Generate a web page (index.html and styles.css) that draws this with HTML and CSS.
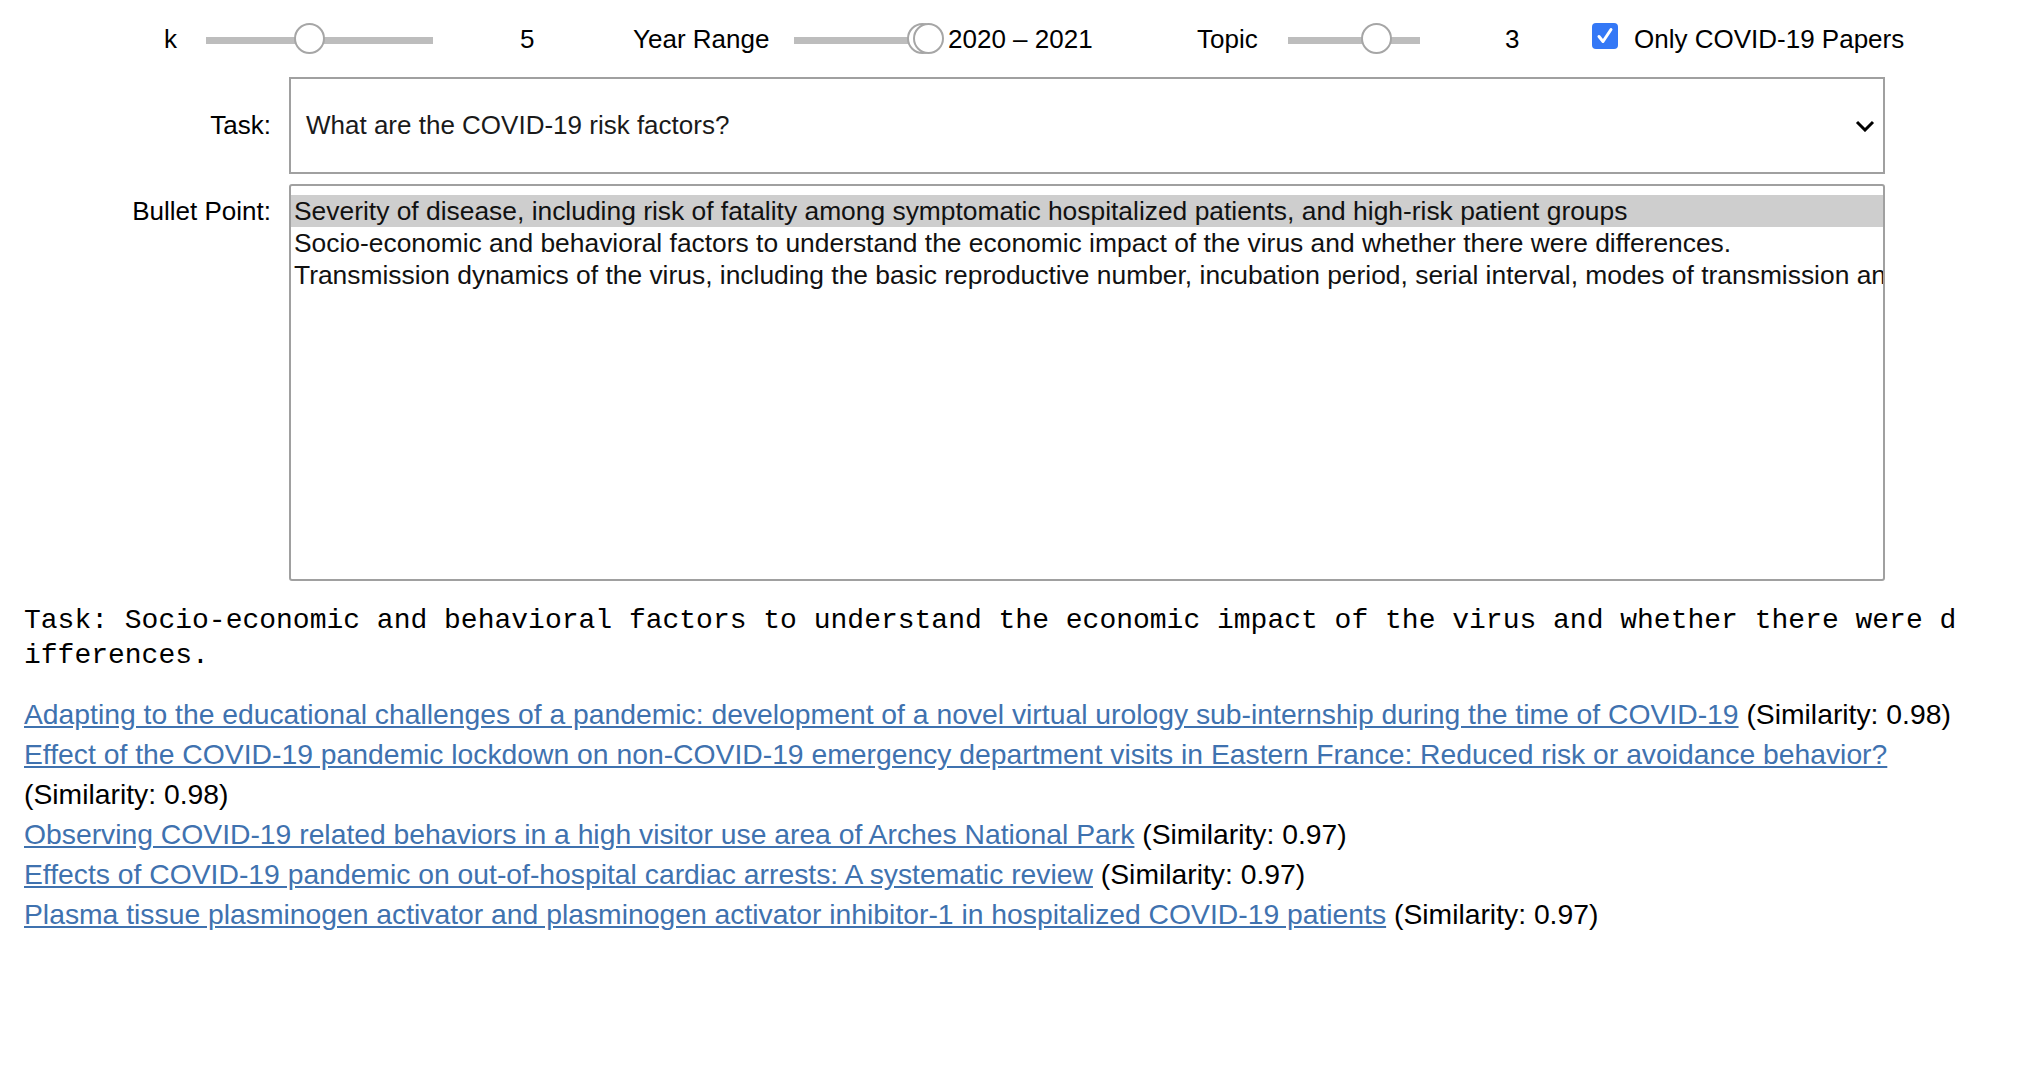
FILE: index.html
```html
<!DOCTYPE html>
<html lang="en">
<head>
<meta charset="utf-8">
<title>COVID-19 Paper Search</title>
<link rel="stylesheet" href="styles.css">
</head>
<body>
<div class="controls">
  <span class="cell c-k">k</span>
  <div class="slider s1"><div class="track"></div><span class="thumb t1"></span></div>
  <span class="cell c-5">5</span>
  <span class="cell c-year">Year Range</span>
  <div class="slider s2"><div class="track"></div><span class="thumb t2a"></span><span class="thumb t2b"></span></div>
  <span class="cell c-range">2020 – 2021</span>
  <span class="cell c-topic">Topic</span>
  <div class="slider s3"><div class="track"></div><span class="thumb t3"></span></div>
  <span class="cell c-3">3</span>
  <span class="checkbox"><svg width="26" height="26" viewBox="0 0 26 26"><rect x="0" y="0" width="26" height="26" rx="4" fill="#3478f6"/><path d="M7 13.5 L11 18.5 L19 6.5" fill="none" stroke="#fff" stroke-width="3" stroke-linecap="round" stroke-linejoin="round"/></svg></span>
  <span class="cell c-only">Only COVID-19 Papers</span>
</div>

<div class="form">
  <div class="flabel task-label">Task:</div>
  <div class="select">
    <span>What are the COVID-19 risk factors?</span>
    <svg class="chev" width="20" height="12" viewBox="0 0 20 12"><polyline points="2,2 10,10 18,2" fill="none" stroke="#000" stroke-width="3"/></svg>
  </div>
  <div class="flabel bullet-label">Bullet Point:</div>
  <div class="listbox">
    <div class="opt selected">Severity of disease, including risk of fatality among symptomatic hospitalized patients, and high-risk patient groups</div>
    <div class="opt">Socio-economic and behavioral factors to understand the economic impact of the virus and whether there were differences.</div>
    <div class="opt">Transmission dynamics of the virus, including the basic reproductive number, incubation period, serial interval, modes of transmission and environmental factors</div>
  </div>
</div>

<pre class="out">Task: Socio-economic and behavioral factors to understand the economic impact of the virus and whether there were differences.</pre>

<div class="results">
  <div class="res"><a href="#">Adapting to the educational challenges of a pandemic: development of a novel virtual urology sub-internship during the time of COVID-19</a> (Similarity: 0.98)</div>
  <div class="res"><a href="#">Effect of the COVID-19 pandemic lockdown on non-COVID-19 emergency department visits in Eastern France: Reduced risk or avoidance behavior?</a> (Similarity: 0.98)</div>
  <div class="res"><a href="#">Observing COVID-19 related behaviors in a high visitor use area of Arches National Park</a> (Similarity: 0.97)</div>
  <div class="res"><a href="#">Effects of COVID-19 pandemic on out-of-hospital cardiac arrests: A systematic review</a> (Similarity: 0.97)</div>
  <div class="res"><a href="#">Plasma tissue plasminogen activator and plasminogen activator inhibitor-1 in hospitalized COVID-19 patients</a> (Similarity: 0.97)</div>
</div>
</body>
</html>
```

FILE: styles.css
```css
html, body {
  margin: 0;
  padding: 0;
  background: #fff;
}
body {
  font-family: "Liberation Sans", Arial, Helvetica, sans-serif;
  font-size: 26px;
  color: #000;
}

/* top control bar */
.controls {
  display: flex;
  align-items: center;
  height: 62px;
  padding-top: 8px;
  margin-bottom: 7px;
  white-space: nowrap;
}
.cell {
  display: block;
  flex: none;
  line-height: 30px;
}
.c-k { margin-left: 164px; width: 42px; }
.c-5 { margin-left: 87px; width: 113px; }
.c-year { width: 161px; }
.c-range { margin-left: 20px; width: 249px; }
.c-topic { width: 91px; }
.c-3 { margin-left: 85px; width: 87px; }
.c-only { margin-left: 16px; }

.slider {
  position: relative;
  flex: none;
  height: 32px;
}
.s1 { width: 227px; }
.s2 { width: 134px; }
.s3 { width: 132px; }
.track {
  position: absolute;
  left: 0;
  right: 0;
  top: 14px;
  height: 7px;
  background: #bdbdbd;
}
.thumb {
  position: absolute;
  top: 0;
  width: 31px;
  height: 31px;
  margin-left: -15.5px;
  box-sizing: border-box;
  border: 2px solid #a6a6a6;
  border-radius: 50%;
  background: #fff;
}
.t1 { left: 103px; }
.t2a { left: 128px; }
.t2b { left: 134px; }
.t3 { left: 88px; }

.checkbox {
  flex: none;
  width: 26px;
  height: 26px;
  margin-top: -6px;
}
.checkbox svg { display: block; }

/* form */
.form {
  display: grid;
  grid-template-columns: 271px 1596px;
  column-gap: 18px;
  row-gap: 10px;
}
.flabel {
  text-align: right;
}
.task-label {
  align-self: center;
}
.bullet-label {
  margin-top: 11px;
  line-height: 32px;
}
.select {
  box-sizing: border-box;
  height: 97px;
  border: 2px solid #a0a0a0;
  display: flex;
  align-items: center;
  justify-content: space-between;
  padding: 0 8px 0 15px;
  color: #1a1a1a;
}
.chev { display: block; }
.listbox {
  box-sizing: border-box;
  height: 397px;
  border: 2px solid #a0a0a0;
  border-radius: 3px;
  padding-top: 9px;
  overflow: hidden;
}
.opt {
  height: 32px;
  line-height: 32px;
  padding-left: 3px;
  white-space: nowrap;
  font-size: 26.4px;
  color: #111;
}
.opt.selected {
  background: #cecece;
}

/* output */
.out {
  font-family: "Liberation Mono", "Courier New", monospace;
  font-size: 28px;
  line-height: 35px;
  width: 1940px;
  margin: 22px 0 0 24px;
  white-space: pre-wrap;
  word-break: break-all;
}

.results {
  width: 1940px;
  margin: 21px 0 0 24px;
  font-size: 28.3px;
  line-height: 40px;
}
.res a {
  color: #3f72af;
  text-decoration: underline;
}
```
